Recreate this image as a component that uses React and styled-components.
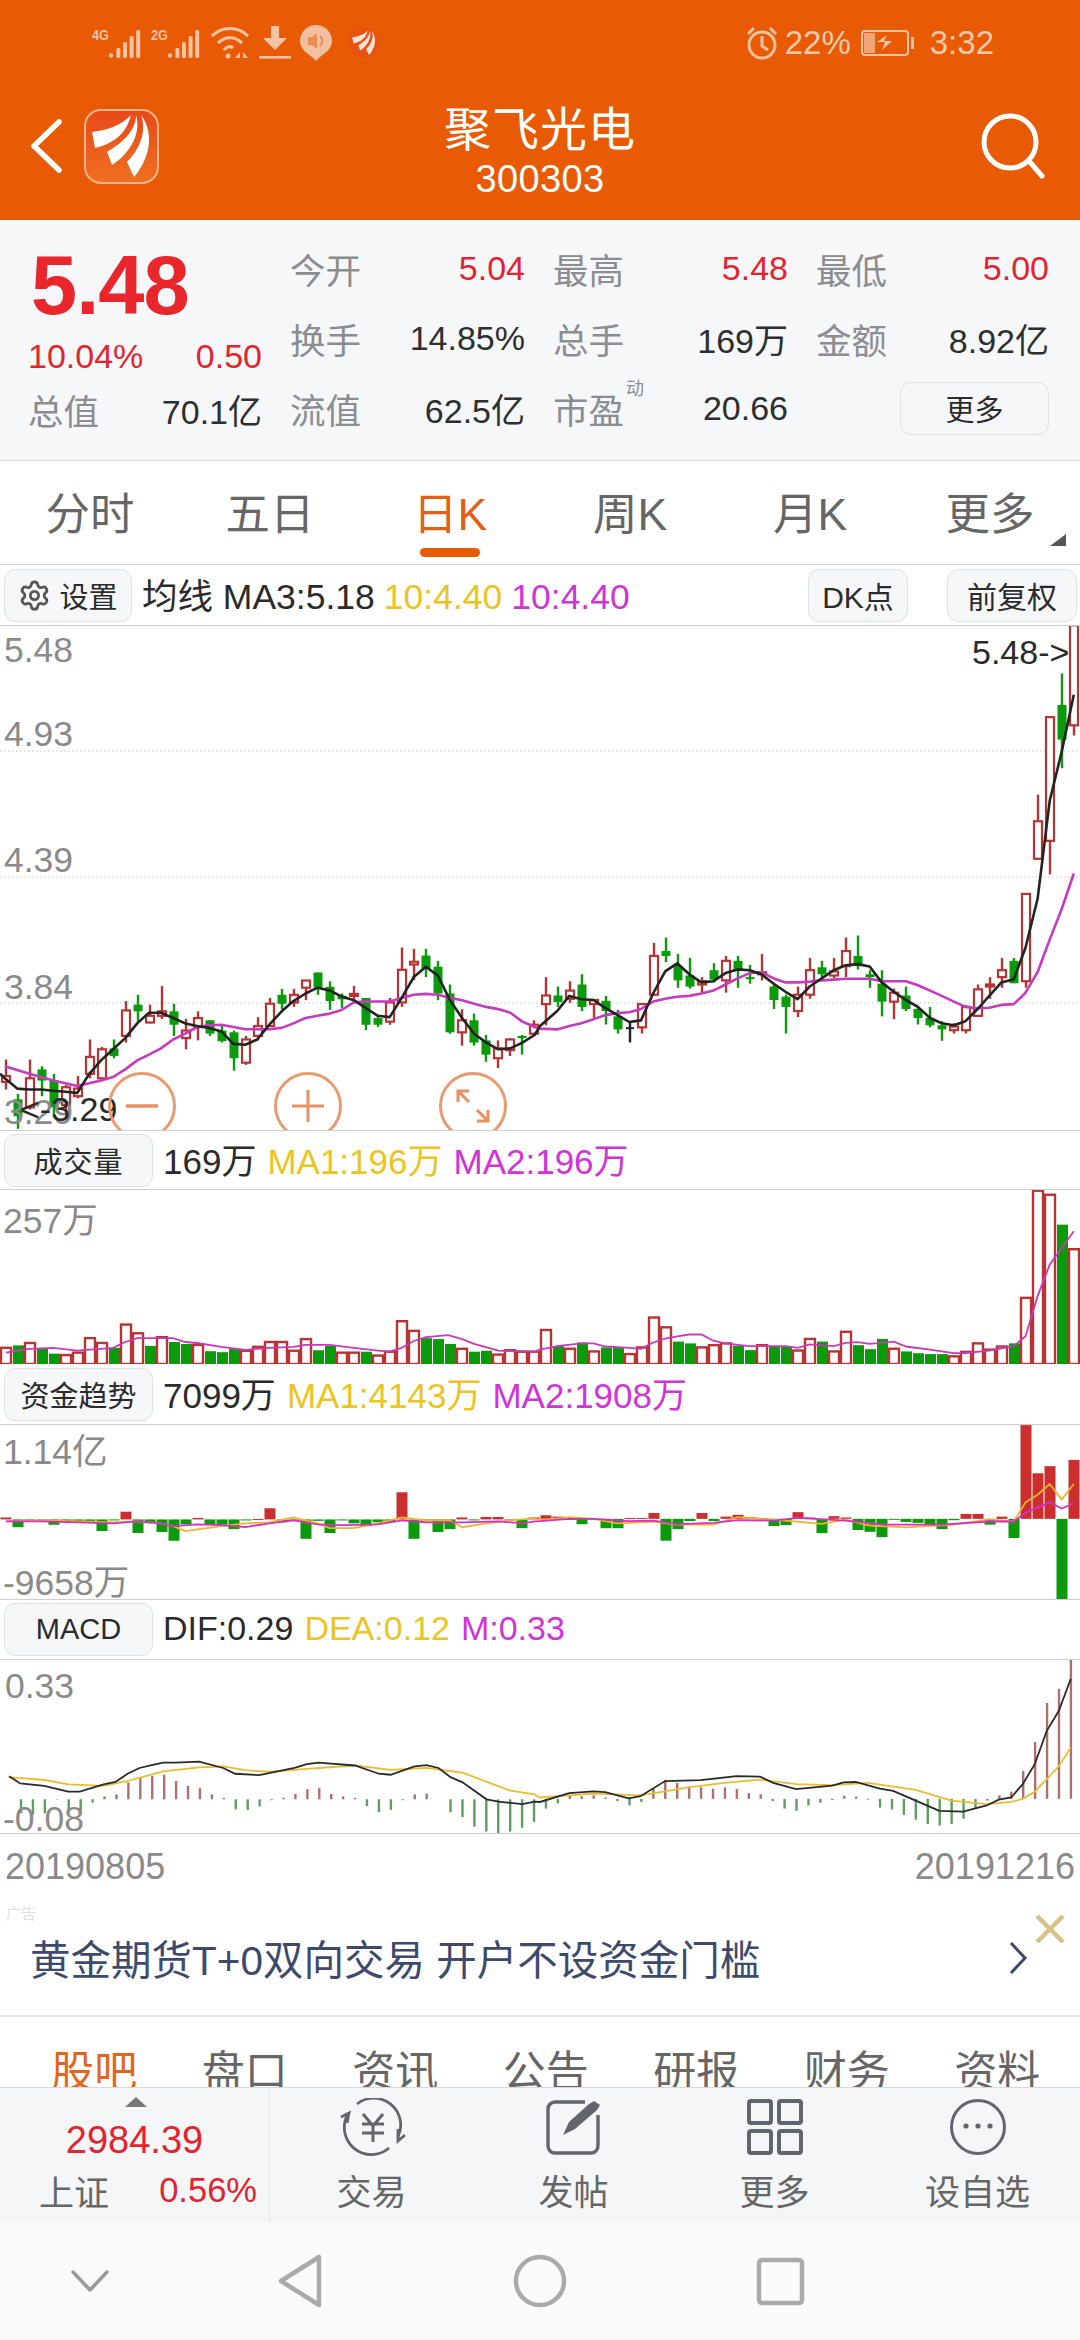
import React from "react";
import styled, { createGlobalStyle } from "styled-components";
import { Settings } from "lucide-react";

const FONT = '"Liberation Sans", "Noto Sans CJK SC", sans-serif';
const ORANGE = "#e85a04";
const RED = "#e5232e";
const YELLOW = "#ecc31f";
const MAGENTA = "#d134d6";
const DOWN = "#0b9a0b";

const Global = createGlobalStyle`
  html, body { margin: 0; padding: 0; background: #fff; }
  * { box-sizing: border-box; }
  #root { width: 1080px; height: 2340px; overflow: hidden; font-family: ${FONT}; }
`;

const Page = styled.div`display:flex;flex-direction:column;width:1080px;height:2340px;overflow:hidden;background:#fff;`;

/* Header */
const Header = styled.header`background:${ORANGE};height:220px;display:flex;flex-direction:column;flex:none;`;
const StatusBar = styled.div`height:86px;display:flex;align-items:center;justify-content:space-between;padding:0 86px 0 92px;color:#f8c9a8;`;
const StatusGroup = styled.div`display:flex;align-items:center;gap:${p => p.$gap || 8}px;font-size:33px;`;
const TitleBar = styled.div`height:134px;display:grid;grid-template-columns:1fr auto 1fr;align-items:center;padding:0 30px 0 30px;`;
const HeaderLeft = styled.div`display:flex;align-items:center;gap:21px;margin-top:-14px;`;
const TitleBlock = styled.div`text-align:center;color:#fff;`;
const StockName = styled.div`font-size:47px;line-height:52px;letter-spacing:1px;`;
const StockCode = styled.div`font-size:38px;line-height:46px;letter-spacing:.4px;`;
const HeaderRight = styled.div`display:flex;justify-content:flex-end;margin:-14px 4px 0 0;`;

/* Quote */
const Quote = styled.section`height:240px;background:#f6f7f9;flex:none;padding:13px 30px 0 28px;display:flex;`;
const QuoteLeft = styled.div`width:234px;margin-right:28px;flex:none;`;
const BigPrice = styled.div`font-size:83px;line-height:106px;font-weight:700;color:#e8262c;letter-spacing:-1px;padding-left:3px;`;
const PctRow = styled.div`height:35px;line-height:35px;display:flex;justify-content:space-between;color:${RED};font-size:34px;`;
const StatRow = styled.div`height:70px;display:flex;align-items:center;justify-content:space-between;`;
const QuoteGrid = styled.div`flex:1;display:grid;grid-template-columns:235px 235px 233px;column-gap:28px;grid-auto-rows:70px;`;
const Label = styled.span`position:relative;font-size:35.5px;color:#8b8d90;`;
const Sup = styled.span`position:absolute;left:73px;top:-9px;font-size:18px;color:#8b8d90;`;
const Value = styled.span`font-size:34px;color:${p => (p.$red ? RED : "#2d2e30")};`;
const Btn = styled.div`display:flex;align-items:center;justify-content:center;gap:${p => p.$gap || 0}px;flex:none;width:${p => p.$w}px;height:53px;border:1.5px solid #e0e1e3;border-radius:11px;background:#f6f7f9;font-size:${p => p.$fs || 29}px;color:#2b2b2b;letter-spacing:${p => p.$ls || 0}px;`;
const MoreCell = styled.div`display:flex;align-items:center;justify-content:flex-end;`;

/* Period tabs */
const Periods = styled.nav`height:105px;flex:none;display:grid;grid-template-columns:repeat(6,180px);border-top:1.5px solid #d8d8d8;border-bottom:1.5px solid #cfcfcf;position:relative;`;
const PeriodTab = styled.div`position:relative;display:flex;justify-content:center;align-items:center;padding-bottom:5px;font-size:44.5px;color:${p => (p.$on ? "#e45f16" : "#666")};`;
const Underline = styled.div`position:absolute;left:60px;bottom:7px;width:60px;height:9px;border-radius:5px;background:${ORANGE};`;
const Corner = styled.div`position:absolute;right:14px;bottom:18px;border-left:16px solid transparent;border-bottom:12px solid #555;`;

/* Legend rows */
const Legend = styled.div`height:${p => p.$h}px;flex:none;display:flex;align-items:center;padding-left:4px;border-bottom:1.5px solid #cfcfcf;border-top:${p => (p.$top ? "1.5px solid #cfcfcf" : "none")};font-size:${p => p.$fs || 35}px;position:relative;`;
const LegendItems = styled.div`display:flex;align-items:baseline;gap:${p => p.$gap || 11}px;margin-left:10px;margin-top:-3px;`;
const LegendText = styled.span`color:${p => p.$c || "#2b2b2b"};`;
const LegendEnd = styled.div`margin-left:auto;display:flex;gap:39px;padding-right:3px;`;

/* Charts */
const Panel = styled.div`position:relative;height:${p => p.$h}px;flex:none;overflow:hidden;border-bottom:${p => (p.$line ? "1.5px solid #cfcfcf" : "none")};`;
const ChartSvg = styled.svg`display:block;width:1080px;height:100%;`;
const AxisLabel = styled.span`position:absolute;left:${p => p.$x}px;top:${p => p.$y}px;font-size:35.5px;line-height:40px;color:#8a8a8a;white-space:nowrap;`;
const MarkText = styled.span`position:absolute;left:${p => p.$x}px;top:${p => p.$y}px;font-size:34px;line-height:40px;color:#2a2a2a;white-space:nowrap;`;
const ZoomBtn = styled.div`position:absolute;left:${p => p.$x - 34}px;top:446px;width:68px;height:68px;border-radius:50%;border:3px solid #e89a70;display:flex;align-items:center;justify-content:center;`;

const Dates = styled.div`height:66px;flex:none;display:flex;justify-content:space-between;align-items:center;padding:0 5px;font-size:36px;color:#8a8a8a;`;

/* Ad */
const Ad = styled.div`position:relative;height:117px;flex:none;border-bottom:2px solid #e4e4e4;display:flex;align-items:center;padding:0 52px 0 30px;justify-content:space-between;`;
const AdTag = styled.span`position:absolute;left:6px;top:2px;font-size:15px;color:#dedede;`;
const AdText = styled.span`font-size:40.5px;color:#3d4a6c;white-space:pre;`;
const AdClose = styled.svg`position:absolute;right:15px;top:15px;`;

/* Info tabs */
const InfoTabs = styled.div`height:70px;flex:none;overflow:hidden;display:grid;grid-template-columns:repeat(7,150.5px);padding:31px 0 0 19px;`;
const InfoTab = styled.div`text-align:center;font-size:43px;line-height:48px;color:${p => (p.$on ? "#e4641c" : "#666")};`;

/* Bottom */
const Bottom = styled.div`height:135px;flex:none;display:flex;background:#f5f6f8;border-top:1.5px solid #d9d9d9;`;
const Index = styled.div`width:270px;border-right:1.5px solid #e4e5e8;display:flex;flex-direction:column;align-items:center;position:relative;padding-top:30px;`;
const IndexArrow = styled.div`position:absolute;top:9px;left:125px;border-left:11px solid transparent;border-right:11px solid transparent;border-bottom:10px solid #777;`;
const IndexVal = styled.div`font-size:38px;line-height:44px;color:${RED};`;
const IndexRow = styled.div`width:100%;padding:3px 12px 0 39px;display:flex;justify-content:space-between;align-items:center;`;
const IndexName = styled.span`font-size:35px;color:#666;`;
const IndexPct = styled.span`font-size:34.5px;color:${RED};`;
const Actions = styled.div`flex:1;display:grid;grid-template-columns:203px 201px 201px 205px;`;
const Action = styled.div`display:flex;flex-direction:column;align-items:center;padding-top:10px;gap:17px;font-size:35px;line-height:40px;color:#666;`;
const Nav = styled.div`flex:1;background:#fafafa;display:flex;align-items:center;position:relative;`;
const NavSvg = styled.svg`display:block;`;

/* candles: [type, bodyTop, bodyBottom, high, low] as read from the picture */
const CL = [
["r",1380,1393,1343,1410],["g",1432,1470,1420,1498],["r",1385,1450,1343,1455],["g",1365,1390,1358,1425],["g",1390,1450,1375,1470],
["r",1405,1445,1400,1470],["r",1408,1425,1380,1430],["r",1337,1375,1298,1385],["r",1320,1385,1315,1392],["g",1318,1335,1298,1340],
["r",1233,1290,1212,1305],["g",1220,1235,1198,1260],["r",1245,1260,1220,1262],["r",1235,1245,1178,1252],["g",1235,1265,1218,1290],
["r",1278,1295,1252,1320],["r",1250,1270,1235,1300],["g",1255,1285,1255,1290],["g",1278,1302,1265,1305],["g",1282,1340,1278,1368],
["r",1298,1350,1290,1355],["r",1268,1290,1248,1300],["r",1218,1268,1205,1270],["g",1198,1218,1185,1230],["r",1198,1215,1185,1225],
["r",1166,1182,1165,1210],["g",1148,1182,1148,1198],["g",1180,1212,1168,1232],["g",1200,1208,1195,1228],["r",1196,1200,1178,1215],
["g",1205,1265,1205,1277],["g",1250,1265,1245,1270],["r",1215,1258,1205,1265],["r",1142,1215,1092,1225],["r",1124,1130,1095,1165],
["g",1110,1140,1095,1158],["g",1135,1195,1122,1210],["g",1195,1282,1175,1285],["r",1255,1282,1230,1312],["g",1255,1305,1240,1312],
["g",1300,1332,1288,1348],["r",1318,1340,1300,1362],["r",1298,1322,1295,1335],["g",1290,1295,1288,1332],["r",1265,1285,1255,1290],
];
const CR = [
["r",1067,1088,1022,1140],["g",1067,1083,1045,1095],["r",1055,1075,1032,1085],["g",1040,1095,1015,1105],["r",1078,1088,1078,1122],
["g",1080,1105,1068,1138],["g",1118,1150,1102,1160],["k",1147,1149,1130,1182],["r",1088,1145,1088,1160],["r",970,1065,938,1068],
["g",958,970,925,985],["g",995,1030,965,1048],["g",1018,1045,975,1050],["r",1032,1040,1022,1060],["g",1005,1028,988,1035],
["r",982,1030,970,1060],["g",982,1005,970,1048],["g",1022,1026,992,1038],["r",1010,1015,965,1030],["g",1045,1078,1040,1100],
["g",1070,1095,1065,1160],["r",1065,1105,1045,1120],["r",1005,1065,975,1075],["g",998,1015,982,1022],["r",1008,1018,975,1025],
["r",958,995,925,1022],["g",970,995,920,1003],["g",1015,1022,1005,1048],["g",1038,1082,1005,1118],["r",1060,1082,1050,1125],
["g",1067,1100,1045,1105],["g",1100,1122,1095,1138],["g",1122,1140,1095,1145],["g",1140,1150,1130,1178],["r",1143,1152,1135,1160],
["r",1095,1152,1090,1160],["r",1052,1117,1040,1118],["r",1040,1045,1022,1075],["r",1005,1022,975,1048],["g",982,1037,975,1037],
["r",818,1032,818,1048],["r",640,732,575,735],["r",385,688,385,770],["g",355,440,278,510],["r",160,405,160,430],
];
const priceYL = v => 460 + v / 2.24;
const priceYR = v => 560 + v / 2.45;
const candles = [...CL.map(c => [c[0], ...c.slice(1).map(priceYL)]), ...CR.map(c => [c[0], ...c.slice(1).map(priceYR)])];

const pts = (left, right, fl, fr) =>
  [...left.map(([x, y]) => `${(x / 2.9).toFixed(1)},${fl(y).toFixed(1)}`), ...right.map(([x, y]) => `${(540 + x / 2.9).toFixed(1)},${fr(y).toFixed(1)}`)].join(" ");

const blackL = [[0,1375],[14,1385],[50,1408],[85,1410],[120,1410],[155,1413],[190,1415],[224,1418],[259,1375],[293,1345],[328,1320],[363,1295],[398,1262],[432,1238],[467,1238],[502,1250],[537,1262],[572,1268],[607,1272],[642,1280],[677,1308],[711,1310],[746,1298],[781,1265],[817,1235],[851,1212],[886,1195],[921,1182],[956,1188],[991,1202],[1026,1210],[1061,1228],[1096,1245],[1130,1248],[1165,1205],[1200,1158],[1235,1135],[1270,1155],[1305,1210],[1340,1250],[1375,1285],[1410,1305],[1445,1320],[1480,1318],[1515,1305],[1550,1288]];
const blackR = [[0,1142],[50,1105],[85,1068],[120,1076],[155,1078],[190,1098],[225,1115],[259,1132],[293,1128],[328,1062],[363,1008],[398,988],[433,1015],[468,1035],[503,1032],[538,1012],[573,1003],[608,1005],[642,1015],[678,1038],[712,1058],[747,1076],[782,1045],[817,1025],[852,1005],[886,993],[921,990],[956,996],[991,1035],[1026,1058],[1061,1078],[1096,1095],[1131,1122],[1165,1135],[1200,1140],[1234,1130],[1269,1100],[1303,1068],[1338,1035],[1374,1027],[1408,950],[1443,830],[1478,590],[1513,470],[1548,330]];
const magL = [[14,1358],[85,1375],[155,1390],[224,1402],[293,1390],[328,1382],[363,1365],[398,1345],[432,1332],[467,1318],[502,1298],[537,1285],[572,1270],[607,1266],[642,1265],[677,1270],[711,1275],[746,1275],[781,1275],[817,1272],[851,1262],[886,1250],[921,1245],[956,1240],[991,1232],[1026,1215],[1061,1213],[1096,1213],[1130,1213],[1165,1205],[1200,1198],[1235,1196],[1270,1198],[1305,1205],[1340,1210],[1375,1218],[1410,1225],[1445,1230],[1480,1238],[1515,1258],[1550,1270]];
const magR = [[0,1148],[50,1150],[85,1142],[120,1135],[155,1125],[190,1115],[225,1110],[259,1108],[293,1100],[328,1082],[363,1075],[398,1070],[433,1068],[468,1062],[503,1055],[538,1040],[573,1025],[608,1012],[642,1010],[678,1025],[712,1035],[747,1035],[782,1033],[817,1030],[852,1028],[886,1026],[921,1026],[956,1026],[991,1032],[1026,1032],[1061,1032],[1096,1042],[1131,1055],[1165,1068],[1200,1082],[1234,1095],[1269,1098],[1303,1097],[1338,1090],[1374,1088],[1408,1060],[1443,1010],[1478,930],[1513,855],[1548,768]];

const lowY = v => 1120 + v / 2.063;
const lowYR = v => 1180 + v / 2.24;

const volL = ["r470","g465","r460","g472","g482","r485","r480","r450","r460","g470","r422","r440","g466","r448","g458","g462","r464","g477","g479","g472","r476","r468","r458","r458","r476","r452","g475","g466","r480","r480","g478","r486","r478","r415","r435","g450","g452","g462","r472","g478","g476","r484","r475","r478","r478"];
const volR = ["r336","g372","r378","g364","r384","g375","g376","r390","r375","r308","r330","g362","g366","r375","r370","r366","g371","g381","r370","g372","g372","r382","r356","g362","r384","r340","g370","g379","g356","r378","g384","g388","g390","g390","r395","r385","r366","r380","r373","g366","r264","r24","r33","g100","r155"];
const vols = [...volL.map(s => [s[0], lowY(+s.slice(1))]), ...volR.map(s => [s[0], lowYR(+s.slice(1))])];
const volLineL = [[17,480],[85,472],[155,470],[224,476],[293,472],[328,470],[363,458],[398,450],[433,450],[502,450],[537,458],[572,460],[642,468],[711,474],[781,470],[851,468],[886,464],[956,464],[1026,470],[1096,476],[1130,478],[1165,470],[1200,456],[1235,448],[1300,444],[1340,452],[1375,462],[1445,476],[1550,478]];
const volLineR = [[0,380],[50,372],[120,366],[155,366],[190,373],[259,376],[293,378],[328,364],[363,355],[398,350],[433,346],[468,346],[503,360],[538,366],[607,372],[712,372],[747,376],[782,368],[852,372],[886,365],[921,363],[956,367],[1026,362],[1061,373],[1131,380],[1200,388],[1234,388],[1303,382],[1374,372],[1408,350],[1443,260],[1478,190],[1548,115]];

const fundL = [820,840,824,826,835,827,827,827,848,826,808,852,832,850,868,834,821,834,835,844,825,823,801,830,826,864,827,852,825,832,838,830,830,768,864,828,850,844,820,826,819,819,826,842,820];
const fundR = [751,754,760,771,760,780,780,757,757,746,808,782,764,746,764,754,750,755,757,775,773,744,756,791,753,756,784,788,800,761,766,768,772,782,762,748,748,772,754,802,549,657,641,939,627];
const fundBars = [...fundL.map(v => [lowY(824), lowY(v)]), ...fundR.map(v => [lowYR(759), lowYR(v)])];
const fundYL = [[17,828],[120,826],[224,828],[328,830],[398,828],[467,832],[502,838],[537,848],[642,838],[711,832],[781,830],[851,820],[921,832],[956,842],[1026,842],[1096,832],[1165,820],[1235,826],[1305,826],[1340,840],[1410,832],[1480,826],[1550,822]];
const fundML = [[17,828],[120,828],[224,830],[328,832],[398,828],[467,832],[502,838],[572,834],[642,836],[711,840],[781,832],[851,826],[921,834],[991,836],[1096,834],[1165,826],[1235,830],[1340,830],[1445,828],[1515,832],[1550,828]];
const fundYR = [[0,762],[85,755],[155,759],[224,769],[328,765],[398,772],[503,772],[573,755],[678,761],[817,770],[886,761],[956,774],[1061,778],[1200,772],[1303,760],[1374,765],[1408,722],[1443,705],[1478,681],[1513,716],[1548,681]];
const fundMR = [[0,764],[85,759],[155,759],[259,764],[328,763],[398,771],[503,768],[573,762],[678,763],[747,757],[886,763],[1000,772],[1165,772],[1303,765],[1374,765],[1408,745],[1478,722],[1513,736],[1548,724]];

const macdL = [1403,1432,1435,1432,1404,1425,1430,1410,1397,1393,1368,1357,1355,1352,1365,1375,1380,1393,1400,1424,1425,1418,1405,1400,1392,1382,1380,1392,1397,1400,1417,1430,1425,1405,1393,1391,1403,1430,1440,1460,1470,1473,1470,1462,1450];
const macdR = [1410,1398,1381,1382,1380,1385,1393,1403,1395,1365,1345,1352,1360,1362,1365,1362,1366,1375,1378,1393,1410,1415,1403,1397,1391,1381,1383,1390,1408,1412,1424,1435,1445,1448,1445,1433,1410,1392,1380,1372,1325,1260,1172,1140,1075];
const macdBars = [...macdL.map(v => [lowY(1403), lowY(v)]), ...macdR.map(v => [lowYR(1388), lowYR(v)])];
const macdKL = [[17,1355],[50,1370],[120,1375],[190,1387],[224,1387],[293,1372],[328,1367],[363,1350],[398,1338],[433,1332],[467,1327],[503,1327],[572,1325],[642,1338],[677,1350],[747,1353],[850,1338],[886,1330],[921,1327],[1026,1333],[1096,1350],[1130,1352],[1200,1335],[1235,1332],[1270,1338],[1305,1357],[1340,1368],[1410,1403],[1445,1408],[1515,1413],[1550,1408]];
const macdYL = [[17,1357],[120,1363],[190,1372],[293,1375],[363,1365],[467,1345],[572,1337],[642,1335],[711,1343],[781,1346],[886,1340],[1026,1333],[1130,1342],[1235,1338],[1340,1348],[1480,1385],[1550,1393]];
const macdKR = [[0,1395],[85,1375],[155,1371],[190,1373],[259,1387],[293,1382],[365,1348],[468,1346],[573,1337],[642,1338],[680,1352],[747,1366],[852,1358],[886,1351],[921,1350],[991,1365],[1030,1370],[1096,1392],[1165,1415],[1234,1417],[1303,1403],[1338,1390],[1374,1385],[1408,1355],[1443,1310],[1478,1235],[1513,1190],[1548,1118]];
const macdYR = [[0,1385],[85,1380],[155,1376],[293,1380],[433,1362],[538,1352],[642,1345],[747,1355],[852,1357],[956,1352],[1096,1368],[1200,1392],[1303,1400],[1374,1395],[1408,1388],[1443,1372],[1513,1315],[1548,1272]];

const colX = i => 6 + 12 * i;

const PriceChart = () => (
  <ChartSvg viewBox="0 626 1080 504">
    {[751, 877, 1003].map(y => <line key={y} x1="0" x2="1080" y1={y} y2={y} stroke="#c4c4c4" strokeWidth="1" strokeDasharray="1.5 2.5" />)}
    {candles.map(([t, top, bot, hi, lo], i) => {
      const c = t === "r" ? "#b83434" : t === "g" ? DOWN : "#222";
      return (
        <g key={i}>
          <line x1={colX(i)} x2={colX(i)} y1={hi} y2={lo} stroke={c} strokeWidth="2.4" />
          {t === "k"
            ? <line x1={colX(i) - 4} x2={colX(i) + 4} y1={top} y2={top} stroke={c} strokeWidth="2" />
            : <rect x={colX(i) - (t === "g" ? 4.5 : 4)} y={top} width={t === "g" ? 9 : 8} height={Math.max(bot - top, 2)} fill={t === "g" ? DOWN : "#fff"} stroke={t === "g" ? "none" : c} strokeWidth="2.2" />}
        </g>
      );
    })}
    <polyline points={pts(magL, magR, priceYL, priceYR)} fill="none" stroke="#c63abf" strokeWidth="2.6" strokeLinejoin="round" />
    <polyline points={pts(blackL, blackR, priceYL, priceYR)} fill="none" stroke="#232323" strokeWidth="2.6" strokeLinejoin="round" />
  </ChartSvg>
);

const VolumeChart = () => (
  <ChartSvg viewBox="0 1190 1080 174">
    {vols.map(([t, y], i) => (
      <rect key={i} x={colX(i) - 5} y={y} width={t === "g" ? 11 : 10} height={1364 - y} fill={t === "g" ? DOWN : "#fff"} stroke={t === "g" ? "none" : "#b83434"} strokeWidth="2.4" />
    ))}
    <polyline points={pts(volLineL, volLineR, lowY, lowYR)} fill="none" stroke="#c73ab8" strokeWidth="1.8" />
  </ChartSvg>
);

const FundChart = () => (
  <ChartSvg viewBox="0 1425 1080 174">
    {fundBars.map(([z, y], i) => {
      const up = y < z;
      return <rect key={i} x={colX(i) - 5.5} y={Math.min(z, y)} width="11" height={Math.max(Math.abs(y - z), 1)} fill={up ? "#cc2e2e" : DOWN} />;
    })}
    <polyline points={pts(fundYL, fundYR, lowY, lowYR)} fill="none" stroke="#f0b428" strokeWidth="1.8" />
    <polyline points={pts(fundML, fundMR, lowY, lowYR)} fill="none" stroke="#d62fc4" strokeWidth="1.8" />
  </ChartSvg>
);

const MacdChart = () => (
  <ChartSvg viewBox="0 1660 1080 174">
    {macdBars.map(([z, y], i) => (
      <rect key={i} x={colX(i) - 1.2} y={Math.min(z, y)} width="2.4" height={Math.abs(y - z)} fill={y < z ? "#ae6f6f" : "#5e9e5e"} />
    ))}
    <polyline points={pts(macdYL, macdYR, lowY, lowYR)} fill="none" stroke="#e8bd30" strokeWidth="1.8" />
    <polyline points={pts(macdKL, macdKR, lowY, lowYR)} fill="none" stroke="#2a2a2a" strokeWidth="1.8" />
  </ChartSvg>
);

const SC = "#f6c4a4";

const Signal = ({ label }) => (
  <svg width="50" height="32" viewBox="0 0 50 32">
    <text x="0" y="13" fontSize="14" fontWeight="700" fill={SC} fontFamily="Liberation Sans" textLength="17" lengthAdjust="spacingAndGlyphs">{label}</text>
    <circle cx="19" cy="28.5" r="2.2" fill={SC} />
    {[0, 1, 2, 3].map(i => <rect key={i} x={24.4 + i * 6.6} y={21 - i * 6} width="4" height={10 + i * 6} rx="1.5" fill={SC} />)}
  </svg>
);

const Feathers = () => (
  <>
    <path d="M47 6C38 16 24 21 8 23L11 39C28 35 42 26 47 6Z" fill="#fff" />
    <path d="M52 6C52 22 38 34 23 43L28 56C44 46 58 26 52 6Z" fill="#fff" />
    <path d="M57 6C63 22 56 40 43 53L50 68C64 52 72 26 57 6Z" fill="#fff" />
  </>
);

const Logo = () => (
  <svg width="75" height="75" viewBox="0 0 75 75">
    <defs>
      <linearGradient id="logoBg" x1="0" y1="0" x2="0" y2="1">
        <stop offset="0" stopColor="#e8491a" />
        <stop offset="1" stopColor="#ee7020" />
      </linearGradient>
    </defs>
    <rect x="1" y="1" width="73" height="73" rx="16" fill="url(#logoBg)" stroke="#f8b48c" strokeWidth="2" />
    <Feathers />
  </svg>
);

const Row = ({ label, value, red, children }) => (
  <StatRow>
    <Label>{label}{children}</Label>
    <Value $red={red}>{value}</Value>
  </StatRow>
);

export default function App() {
  return (
    <Page>
      <Global />
      <Header>
        <StatusBar>
          <StatusGroup $gap={9}>
            <Signal label="4G" />
            <Signal label="2G" />
            <svg width="40" height="36" viewBox="0 0 40 36" fill="none" stroke={SC} strokeWidth="3.2">
              <path d="M2 11C12 1 28 1 38 11" /><path d="M8 18C15 11 25 11 32 18" /><path d="M14 25C17 21 21 21 23 23" /><circle cx="18" cy="31" r="2.5" fill={SC} stroke="none" />
              <path d="M25 33l5-6v6zM33 27l5 6h-5z" fill={SC} stroke="none" />
            </svg>
            <svg width="32" height="36" viewBox="0 0 32 36" fill={SC}>
              <path d="M12 1h8v12h8L16 25 4 13h8z" /><rect x="0" y="31" width="32" height="2.6" />
            </svg>
            <svg width="32" height="36" viewBox="0 0 32 36">
              <path d="M16 0a16 16 0 0 1 16 16c0 10-10 13-16 20C10 29 0 26 0 16A16 16 0 0 1 16 0z" fill="#f2c0a0" />
              <path d="M8 12h4l5-4v16l-5-4H8z" fill="#ea8d55" />
              <path d="M20 11c3 3 3 7 0 10" fill="none" stroke="#ea8d55" strokeWidth="2" />
            </svg>
            <svg width="30" height="34" viewBox="0 0 75 75" style={{ marginLeft: 8 }}>
              <circle cx="37" cy="37" r="37" fill="#ea5010" />
              <g opacity=".85"><Feathers /></g>
            </svg>
          </StatusGroup>
          <StatusGroup $gap={7}>
            <svg width="32" height="36" viewBox="0 0 32 36" fill="none" stroke={SC} strokeWidth="3">
              <circle cx="16" cy="20" r="13" /><path d="M16 11v10l6 4M2 9l6-6M30 9l-6-6" />
            </svg>
            <span>22%</span>
            <svg width="54" height="30" viewBox="0 0 54 30" style={{ marginLeft: 3 }}>
              <rect x="1" y="3" width="46" height="24" rx="3" fill="none" stroke={SC} strokeWidth="2" />
              <rect x="3" y="5" width="11" height="20" fill={SC} opacity=".7" />
              <rect x="50" y="9" width="3" height="12" fill={SC} />
              <path d="M16 14l10-7-3 6h8l-10 9 3-8z" fill={SC} />
            </svg>
            <span style={{ marginLeft: 8 }}>3:32</span>
          </StatusGroup>
        </StatusBar>
        <TitleBar>
          <HeaderLeft>
            <svg width="33" height="54" viewBox="0 0 33 54" fill="none" stroke="#fff" strokeWidth="5.5" strokeLinecap="round" strokeLinejoin="round">
              <path d="M29 3L4 27l25 24" />
            </svg>
            <Logo />
          </HeaderLeft>
          <TitleBlock>
            <StockName>聚飞光电</StockName>
            <StockCode>300303</StockCode>
          </TitleBlock>
          <HeaderRight>
            <svg width="66" height="66" viewBox="0 0 66 66" fill="none" stroke="#fff" strokeWidth="5" strokeLinecap="round">
              <circle cx="30" cy="29" r="26" /><path d="M49 48l13 15" />
            </svg>
          </HeaderRight>
        </TitleBar>
      </Header>

      <Quote>
        <QuoteLeft>
          <BigPrice>5.48</BigPrice>
          <PctRow><span>10.04%</span><span>0.50</span></PctRow>
          <Row label="总值" value="70.1亿" />
        </QuoteLeft>
        <QuoteGrid>
          <Row label="今开" value="5.04" red />
          <Row label="最高" value="5.48" red />
          <Row label="最低" value="5.00" red />
          <Row label="换手" value="14.85%" />
          <Row label="总手" value="169万" />
          <Row label="金额" value="8.92亿" />
          <Row label="流值" value="62.5亿" />
          <Row label="市盈" value="20.66"><Sup>动</Sup></Row>
          <MoreCell><Btn $w={149}>更多</Btn></MoreCell>
        </QuoteGrid>
      </Quote>

      <Periods>
        {["分时", "五日", "日K", "周K", "月K", "更多"].map(t => (
          <PeriodTab key={t} $on={t === "日K"}>{t}{t === "日K" && <Underline />}</PeriodTab>
        ))}
        <Corner />
      </Periods>

      <Legend $h={61} $fs={35.5}>
        <Btn $w={128} $gap={8}><Settings size={33} strokeWidth={2} color="#555" /> 设置</Btn>
        <LegendItems $gap={9}>
          <LegendText>均线 MA3:5.18</LegendText>
          <LegendText $c={YELLOW}>10:4.40</LegendText>
          <LegendText $c={MAGENTA}>10:4.40</LegendText>
        </LegendItems>
        <LegendEnd>
          <Btn $w={100} $fs={30}>DK点</Btn>
          <Btn $w={130} $fs={30}>前复权</Btn>
        </LegendEnd>
      </Legend>

      <Panel $h={504}>
        <PriceChart />
        <AxisLabel $x={4} $y={4}>5.48</AxisLabel>
        <AxisLabel $x={4} $y={88}>4.93</AxisLabel>
        <AxisLabel $x={4} $y={214}>4.39</AxisLabel>
        <AxisLabel $x={4} $y={341}>3.84</AxisLabel>
        <AxisLabel $x={4} $y={466}>3.29</AxisLabel>
        <MarkText $x={20} $y={463}>&lt;-3.29</MarkText>
        <MarkText $x={972} $y={6}>5.48-&gt;</MarkText>
        <ZoomBtn $x={142}>
          <svg width="36" height="6" viewBox="0 0 36 6"><path d="M2 3h32" stroke="#e8905f" strokeWidth="3.5" /></svg>
        </ZoomBtn>
        <ZoomBtn $x={308}>
          <svg width="36" height="36" viewBox="0 0 36 36"><path d="M2 18h32M18 2v32" stroke="#e8905f" strokeWidth="3" /></svg>
        </ZoomBtn>
        <ZoomBtn $x={473}>
          <svg width="36" height="36" viewBox="0 0 36 36" fill="none" stroke="#e8905f" strokeWidth="3"><path d="M3 3l11 11M22 22l11 11M3 14V3h11M33 22v11H22" /></svg>
        </ZoomBtn>
      </Panel>

      <Legend $h={60} $top>
        <Btn $w={149} $ls={1}>成交量</Btn>
        <LegendItems>
          <LegendText>169万</LegendText>
          <LegendText $c={YELLOW}>MA1:196万</LegendText>
          <LegendText $c={MAGENTA}>MA2:196万</LegendText>
        </LegendItems>
      </Legend>
      <Panel $h={174}>
        <VolumeChart />
        <AxisLabel $x={3} $y={11}>257万</AxisLabel>
      </Panel>

      <Legend $h={61}>
        <Btn $w={149}>资金趋势</Btn>
        <LegendItems>
          <LegendText>7099万</LegendText>
          <LegendText $c={YELLOW}>MA1:4143万</LegendText>
          <LegendText $c={MAGENTA}>MA2:1908万</LegendText>
        </LegendItems>
      </Legend>
      <Panel $h={174}>
        <FundChart />
        <AxisLabel $x={3} $y={7}>1.14亿</AxisLabel>
        <AxisLabel $x={3} $y={138}>-9658万</AxisLabel>
      </Panel>

      <Legend $h={61} $top $fs={34}>
        <Btn $w={149}>MACD</Btn>
        <LegendItems>
          <LegendText>DIF:0.29</LegendText>
          <LegendText $c={YELLOW}>DEA:0.12</LegendText>
          <LegendText $c={MAGENTA}>M:0.33</LegendText>
        </LegendItems>
      </Legend>
      <Panel $h={174} $line>
        <MacdChart />
        <AxisLabel $x={5} $y={6}>0.33</AxisLabel>
        <AxisLabel $x={3} $y={139}>-0.08</AxisLabel>
      </Panel>

      <Dates><span>20190805</span><span>20191216</span></Dates>

      <Ad>
        <AdTag>广告</AdTag>
        <AdText>黄金期货T+0双向交易 开户不设资金门槛</AdText>
        <svg width="20" height="34" viewBox="0 0 20 34" fill="none" stroke="#3d4a6c" strokeWidth="3"><path d="M3 2l14 15L3 32" /></svg>
        <AdClose width="30" height="28" viewBox="0 0 30 28" fill="none" stroke="#d9c28a" strokeWidth="4.5"><path d="M2 1l26 26M28 1L2 27" /></AdClose>
      </Ad>

      <InfoTabs>
        {["股吧", "盘口", "资讯", "公告", "研报", "财务", "资料"].map((t, i) => (
          <InfoTab key={t} $on={i === 0}>{t}</InfoTab>
        ))}
      </InfoTabs>

      <Bottom>
        <Index>
          <IndexArrow />
          <IndexVal>2984.39</IndexVal>
          <IndexRow><IndexName>上证</IndexName><IndexPct>0.56%</IndexPct></IndexRow>
        </Index>
        <Actions>
          <Action>
            <svg width="68" height="58" viewBox="0 0 68 58" fill="none" stroke="#62656b" strokeWidth="2.8">
              <path d="M19 6A27 27 0 0 1 60 39M51 50A27 27 0 0 1 10 16" />
              <path d="M60 31L60 43L67 37M3 19L11 15L9 25" strokeWidth="2.8" />
              <path d="M25 16L35 28L45 16M24 26H46M24 35H46M35 28V44" strokeWidth="3" />
            </svg>
            交易
          </Action>
          <Action>
            <svg width="58" height="58" viewBox="0 0 58 58" fill="none" stroke="#62656b" strokeWidth="3.4">
              <path d="M40 4H10a7 7 0 0 0-7 7v37a7 7 0 0 0 7 7h36a7 7 0 0 0 7-7V17" />
              <path d="M18 37L24 24L44 6L49 3L55 7L52 12L30 31Z" fill="#62656b" stroke="none" />
            </svg>
            发帖
          </Action>
          <Action>
            <svg width="58" height="58" viewBox="0 0 58 58" fill="none" stroke="#62656b" strokeWidth="4">
              <rect x="3" y="3" width="22" height="22" rx="2" /><rect x="33" y="3" width="22" height="22" rx="2" /><rect x="3" y="33" width="22" height="22" rx="2" /><rect x="33" y="33" width="22" height="22" rx="2" />
            </svg>
            更多
          </Action>
          <Action>
            <svg width="58" height="58" viewBox="0 0 58 58" fill="none" stroke="#62656b" strokeWidth="3">
              <circle cx="29" cy="29" r="26.5" />
              <circle cx="17" cy="28" r="2.6" fill="#62656b" stroke="none" /><circle cx="29" cy="28" r="2.6" fill="#62656b" stroke="none" /><circle cx="41" cy="28" r="2.6" fill="#62656b" stroke="none" />
            </svg>
            设自选
          </Action>
        </Actions>
      </Bottom>

      <Nav>
        <NavSvg width="1080" height="118" viewBox="0 2222 1080 118" fill="none" stroke="#aaa" strokeLinejoin="round" strokeLinecap="round" strokeWidth="4.5">
          <path d="M73 2272l17 18 17-18" stroke="#999" strokeWidth="3.5" />
          <path d="M319 2257v48l-38-24z" />
          <circle cx="540" cy="2281" r="24" />
          <rect x="759" y="2260" width="43" height="43" rx="3" />
        </NavSvg>
      </Nav>
    </Page>
  );
}
